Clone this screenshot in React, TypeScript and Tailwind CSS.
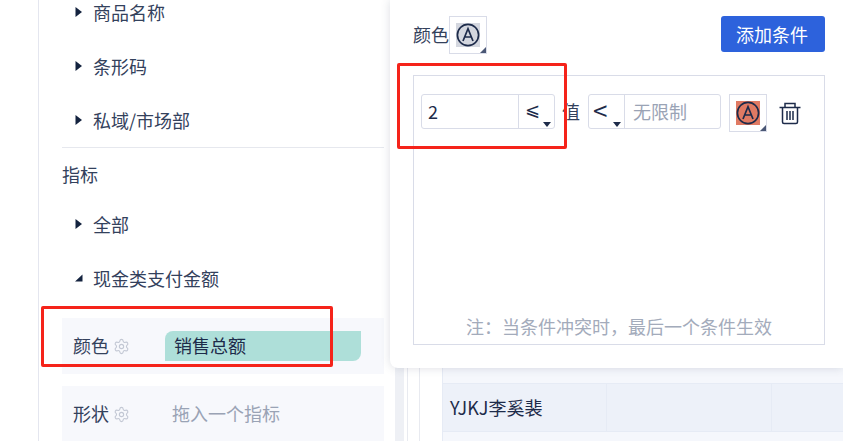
import { Settings } from "lucide-react";

const font = { fontFamily: '"Noto Sans CJK SC", "Noto Sans", sans-serif' };

function Caret({ open }: { open?: boolean }) {
  if (open) {
    return (
      <svg width="8" height="8" viewBox="0 0 8 8" className="shrink-0">
        <path d="M0 7.5H7.5V0.5Z" fill="#14233f" />
      </svg>
    );
  }
  return (
    <svg width="8" height="10" viewBox="0 0 8 10" className="shrink-0">
      <path d="M0.5 0L7 5L0.5 10Z" fill="#14233f" />
    </svg>
  );
}

function TreeRow({ label, open }: { label: string; open?: boolean }) {
  return (
    <div className="flex h-[54px] items-center gap-[10px] pl-[13px] text-[18px] leading-[20px] text-[#33415c]">
      <Caret open={open} />
      <span>{label}</span>
    </div>
  );
}

function AIcon({ bg }: { bg: string }) {
  return (
    <span className={`flex h-[24px] w-[24px] items-center justify-center ${bg}`}>
      <svg width="24" height="24" viewBox="0 0 24 24" fill="none" stroke="#1d2b4a" strokeWidth="1.7">
        <circle cx="12" cy="12" r="10.6" />
        <path d="M7 18L12 5.8L17 18M8.8 14H15.2" />
      </svg>
    </span>
  );
}

function SwatchBox({ bg }: { bg: string }) {
  return (
    <div className="relative flex h-[38px] w-[38px] shrink-0 items-center justify-center border border-[#d9dce8]">
      <AIcon bg={bg} />
      <span className="absolute right-0 bottom-0 h-0 w-0 border-b-[6px] border-l-[6px] border-b-[#4a5775] border-l-transparent" />
    </div>
  );
}

function DropMark() {
  return <span className="absolute right-[3px] bottom-[1px] h-0 w-0 border-x-[4px] border-t-[5px] border-x-transparent border-t-[#1d2b4a]" />;
}

function Slot({ label, children, mt }: { label: string; children: React.ReactNode; mt: string }) {
  return (
    <div className={`flex h-[56px] shrink-0 items-center bg-[#f7f8fc] pl-[11px] ${mt}`}>
      <div className="flex w-[92px] shrink-0 items-center gap-[4px] text-[18px] leading-[24px] text-[#33415c]">
        <span className="-mt-[2px]">{label}</span>
        <Settings size={17} strokeWidth={1.6} className="text-[#c3c8d4]" />
      </div>
      {children}
    </div>
  );
}

function Sidebar() {
  return (
    <div className="h-[441px] w-[390px] shrink-0 overflow-hidden bg-white pl-[38px]">
      <div className="flex h-full flex-col border-l border-[#e4e6ef] pr-[6px] pl-[23px]">
        <div className="-mt-[15px]">
          <TreeRow label="商品名称" />
          <TreeRow label="条形码" />
          <TreeRow label="私域/市场部" />
        </div>
        <div className="border-t border-[#e6e8ee] pt-[12px] text-[18px] leading-[28px] text-[#33415c]">指标</div>
        <div className="mt-[9px]">
          <TreeRow label="全部" />
          <TreeRow label="现金类支付金额" open />
        </div>
        <Slot label="颜色" mt="mt-[13px]">
          <div className="flex h-[30px] w-[196px] items-center rounded-tl-[8px] rounded-br-[8px] bg-[#aedfd9] pl-[9px] text-[18px] leading-[24px] text-[#1d2b4a]">
            <span className="-mt-[2px]">销售总额</span>
          </div>
        </Slot>
        <Slot label="形状" mt="mt-[12px]">
          <span className="-mt-[2px] pl-[7px] text-[18px] text-[#9aa3b5]">拖入一个指标</span>
        </Slot>
      </div>
    </div>
  );
}

function TableBehind() {
  return (
    <div className="flex h-[441px] flex-1 bg-white">
      <div className="ml-[5px] w-[9px] bg-[#eef0f5]" />
      <div className="ml-[3px] w-[13px] border-x border-[#e8eaf0]" />
      <div className="ml-[22px] flex-1 border-l border-[#e6ebf5] pt-[335px] text-[18px] text-[#1d2b4a]">
        <div className="h-[48px] bg-[#f5f7fc]" />
        <div className="flex h-[49px] items-center border-y border-[#e6ebf5] bg-[#edf1f9]">
          <div className="flex h-full w-[164px] items-center border-r border-[#e6ebf5] pl-[7px]">YJKJ李奚裴</div>
          <div className="h-full w-[165px] border-r border-[#e6ebf5]" />
        </div>
        <div className="h-[10px] bg-[#f5f7fc]" />
      </div>
    </div>
  );
}

function TrashIcon() {
  return (
    <svg width="22" height="24" viewBox="0 0 22 24" fill="none" stroke="#1d2b4a" strokeWidth="1.5" className="mt-[7px] ml-[12px] shrink-0">
      <path d="M0.5 6.5H21.5" />
      <path d="M6 6.5V2.5H16V6.5" />
      <path d="M3.5 6.5V21A1.5 1.5 0 0 0 5 22.5H17A1.5 1.5 0 0 0 18.5 21V6.5" />
      <path d="M8 10V19M11 10V19M14 10V19" />
    </svg>
  );
}

function Popover() {
  return (
    <div className="absolute top-0 left-[390px] h-[368px] w-[453px] rounded-bl-[8px] bg-white pt-[16px] pr-[18px] pl-[23px] shadow-[0_0_10px_rgba(60,70,100,0.18)]">
      <div className="flex items-start justify-between">
        <div className="flex items-center text-[18px] leading-[36px] text-[#33415c]">
          <span className="-mt-[2px]">颜色</span>
          <SwatchBox bg="bg-[#d4d7df]" />
        </div>
        <button className="h-[36px] w-[104px] rounded-[3px] bg-[#2d62dc] pr-[2px] text-[18px] text-white">添加条件</button>
      </div>
      <div className="mt-[21px] flex h-[270px] flex-col justify-between border border-[#d9dce8]">
        <div className="flex items-start pt-[18px] pl-[7px]">
          <div className="flex h-[35px] w-[134px] rounded-[3px] border border-[#d9dce8] text-[#1d2b4a]">
            <div className="flex w-[96px] items-center pl-[6px] text-[18px]">2</div>
            <div className="relative flex-1 border-l border-[#d9dce8] pl-[6px] text-[18px] leading-[26px]">
              ⩽
              <DropMark />
            </div>
          </div>
          <span className="ml-[7px] text-[18px] leading-[35px] text-[#33415c]">值</span>
          <div className="ml-[8px] flex h-[35px] w-[133px] rounded-[3px] border border-[#d9dce8] text-[18px]">
            <div className="relative w-[35px] pl-[4px] text-[26px] leading-[30px] text-[#1d2b4a]">
              &lt;
              <DropMark />
            </div>
            <div className="flex flex-1 items-center border-l border-[#d9dce8] pl-[8px] text-[#9aa3b5]">无限制</div>
          </div>
          <div className="ml-[8px]">
            <SwatchBox bg="bg-[#e07a63]" />
          </div>
          <TrashIcon />
        </div>
        <div className="pb-[5px] text-center text-[18px] leading-[26px] text-[#a3abbb]">注：当条件冲突时，最后一个条件生效</div>
      </div>
    </div>
  );
}

export default function App() {
  return (
    <div className="relative flex h-[441px] w-[843px] overflow-hidden bg-white" style={font}>
      <Sidebar />
      <TableBehind />
      <Popover />
      <div className="absolute top-[306px] left-[41px] h-[61px] w-[292px] rounded-[2px] border-[3px] border-[#f5231a]" />
      <div className="absolute top-[63px] left-[397px] h-[86px] w-[170px] rounded-[2px] border-[3px] border-[#f5231a]" />
    </div>
  );
}
